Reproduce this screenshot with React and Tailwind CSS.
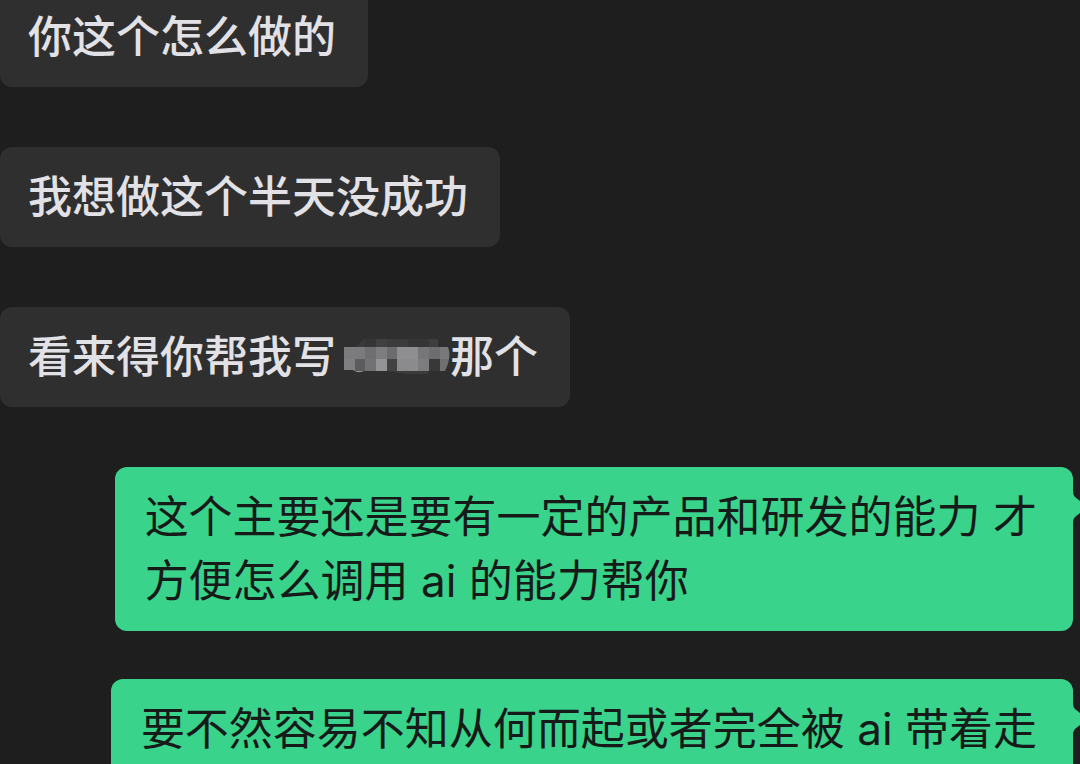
function Mosaic() {
  return (
    <svg
      role="img"
      aria-label="已打码"
      viewBox="0 0 106 36"
      className="ml-2 h-9 w-[106px]"
    >
      <clipPath id="mask">
        <path d="M0 8H11L20 0H94V8H104Q108 18 101 32H84V35H62L44 32H20Q14 35 9 31H0Z" />
      </clipPath>
      <g clipPath="url(#mask)" shapeRendering="crispEdges">
        {ROWS.map((row) =>
          row.cells.map((fill, i) => (
            <rect key={`${row.y}-${i}`} x={XS[i]} y={row.y} width={XS[i + 1] - XS[i]} height={row.h} fill={fill} />
          )),
        )}
      </g>
    </svg>
  );
}

const XS = [0, 11, 21, 32, 43, 53, 64, 74, 85, 96, 107];
const ROWS = [
  { y: 0, h: 8, cells: ["#2f2f2f", "#393939", "#353535", "#404040", "#3b3b3b", "#3b3b3b", "#353535", "#353535", "#3d3d3d", "#2f2f2f"] },
  { y: 8, h: 12, cells: ["#7c7c7e", "#7b7b7d", "#6f6f71", "#7d7d7f", "#6c6c6e", "#8e8e90", "#8e8e90", "#767678", "#6d6d6f", "#79797b"] },
  { y: 20, h: 12, cells: ["#7f7f81", "#5c5c5e", "#727274", "#949496", "#424242", "#8b8b8d", "#8b8b8d", "#7d7d7f", "#383838", "#707072"] },
  { y: 32, h: 4, cells: ["#2f2f2f", "#8f8f91", "#2f2f2f", "#2f2f2f", "#383838", "#3b3b3b", "#3b3b3b", "#3b3b3b", "#2f2f2f", "#2f2f2f"] },
];

function Incoming({ children }) {
  return (
    <li className="mb-[60px] flex w-fit items-center rounded-xl bg-[#2f2f2f] py-[18px] pr-8 pl-7 font-medium text-[#e2e1e6]">
      {children}
    </li>
  );
}

function Outgoing({ children }) {
  return (
    <li className="relative mr-[7px] mb-12 ml-auto w-fit rounded-xl bg-[#3ad38c] py-[18px] pr-9 pl-[30px] text-[#161a18]">
      {children}
      <svg aria-hidden="true" viewBox="0 0 8 32" className="absolute top-6 -right-[7px] h-8 w-2">
        <path d="M0 0H1Q1 4 3 6L8 10V22L3 26Q1 28 1 32H0Z" fill="#3ad38c" />
      </svg>
    </li>
  );
}

export default function App() {
  return (
    <main className="h-screen overflow-hidden bg-[#1e1e1e] font-[Inter,'Noto_Sans_CJK_SC',sans-serif] text-[44px] leading-[64px]">
      <ul className="-mt-[13px]">
        <Incoming>你这个怎么做的</Incoming>
        <Incoming>我想做这个半天没成功</Incoming>
        <Incoming>
          <span>看来得你帮我写</span>
          <Mosaic />
          <span>那个</span>
        </Incoming>
        <Outgoing>
          这个主要还是要有一定的产品和研发的能力 才
          <br />
          方便怎么调用 ai 的能力帮你
        </Outgoing>
        <Outgoing>要不然容易不知从何而起或者完全被 ai 带着走</Outgoing>
      </ul>
    </main>
  );
}
